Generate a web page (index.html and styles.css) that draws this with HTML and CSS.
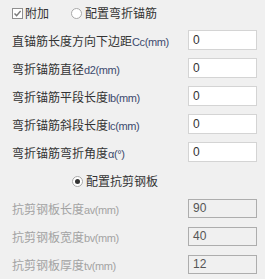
FILE: index.html
```html
<!DOCTYPE html>
<html lang="zh">
<head>
<meta charset="utf-8">
<link rel="stylesheet" href="styles.css">
</head>
<body>
<div class="panel">
  <div class="top-row">
    <label class="opt">
      <span class="checkbox"><svg width="9" height="9" viewBox="0 0 9 9"><path d="M1.5 4.5 L3.6 6.6 L7.6 2" fill="none" stroke="#7a7a7a" stroke-width="1.4"/></svg></span>
      <span class="opt-text">附加</span>
    </label>
    <label class="opt opt-radio">
      <span class="radio"></span>
      <span class="opt-text">配置弯折锚筋</span>
    </label>
  </div>

  <div class="row"><span class="lbl">直锚筋长度方向下边距<span class="unit">Cc(mm)</span></span><div class="field">0</div></div>
  <div class="row"><span class="lbl">弯折锚筋直径<span class="unit">d2(mm)</span></span><div class="field">0</div></div>
  <div class="row"><span class="lbl">弯折锚筋平段长度<span class="unit">lb(mm)</span></span><div class="field">0</div></div>
  <div class="row"><span class="lbl">弯折锚筋斜段长度<span class="unit">lc(mm)</span></span><div class="field">0</div></div>
  <div class="row"><span class="lbl">弯折锚筋弯折角度<span class="unit">α(°)</span></span><div class="field">0</div></div>

  <div class="radio-row">
    <label class="opt">
      <span class="radio checked"><span class="dot"></span></span>
      <span class="opt-text">配置抗剪钢板</span>
    </label>
  </div>

  <div class="row disabled"><span class="lbl">抗剪钢板长度<span class="unit">av(mm)</span></span><div class="field">90</div></div>
  <div class="row disabled"><span class="lbl">抗剪钢板宽度<span class="unit">bv(mm)</span></span><div class="field">40</div></div>
  <div class="row disabled"><span class="lbl">抗剪钢板厚度<span class="unit">tv(mm)</span></span><div class="field">12</div></div>
</div>
</body>
</html>
```

FILE: styles.css
```css
html, body {
  margin: 0;
  padding: 0;
  background: #f0f0f0;
}
body {
  width: 265px;
  height: 279px;
  overflow: hidden;
  font-family: "Noto Sans CJK SC", "Liberation Sans", sans-serif;
  font-size: 12px;
  color: #333;
}
.panel {
  display: flex;
  flex-direction: column;
  padding: 3px 0 0 12px;
  gap: 8px;
}
.top-row {
  display: flex;
  align-items: center;
  height: 20px;
  gap: 22px;
  margin-bottom: -1px;
}
.opt {
  display: flex;
  align-items: center;
  gap: 2px;
  height: 20px;
}
.opt-text {
  line-height: 20px;
  color: #333;
}
.checkbox {
  width: 9px;
  height: 9px;
  border: 1px solid #8f8f8f;
  background: #fff;
  display: flex;
  align-items: center;
  justify-content: center;
}
.checkbox svg { display: block; }
.radio {
  width: 9px;
  height: 9px;
  border: 1px solid #a8a8a8;
  border-radius: 50%;
  background: #fff;
  display: flex;
  align-items: center;
  justify-content: center;
  margin-right: 1px;
}
.radio .dot {
  width: 5px;
  height: 5px;
  border-radius: 50%;
  background: #333;
}
.row {
  display: flex;
  align-items: center;
  height: 20px;
}
.lbl {
  width: 176px;
  line-height: 20px;
  white-space: nowrap;
  color: #333;
  margin-top: 2px;
}
.unit {
  font-family: "Liberation Sans", sans-serif;
  font-size: 11px;
  letter-spacing: -0.4px;
  color: #3c4a6e;
}
.field {
  box-sizing: border-box;
  width: 69px;
  height: 20px;
  border: 1px solid #d4d4d4;
  background: #fff;
  font-family: "Liberation Sans", sans-serif;
  font-size: 12px;
  line-height: 18px;
  padding-left: 4px;
  color: #333;
}
.radio-row {
  display: flex;
  height: 20px;
  align-items: center;
  padding-left: 60px;
  margin-top: 1px;
  margin-bottom: -1px;
}
.disabled .lbl,
.disabled .unit {
  color: #a3a3a3;
}
.disabled .field {
  background: #f0f0f0;
  border-color: #adadad;
  color: #555;
  height: 19px;
  line-height: 17px;
}
```
